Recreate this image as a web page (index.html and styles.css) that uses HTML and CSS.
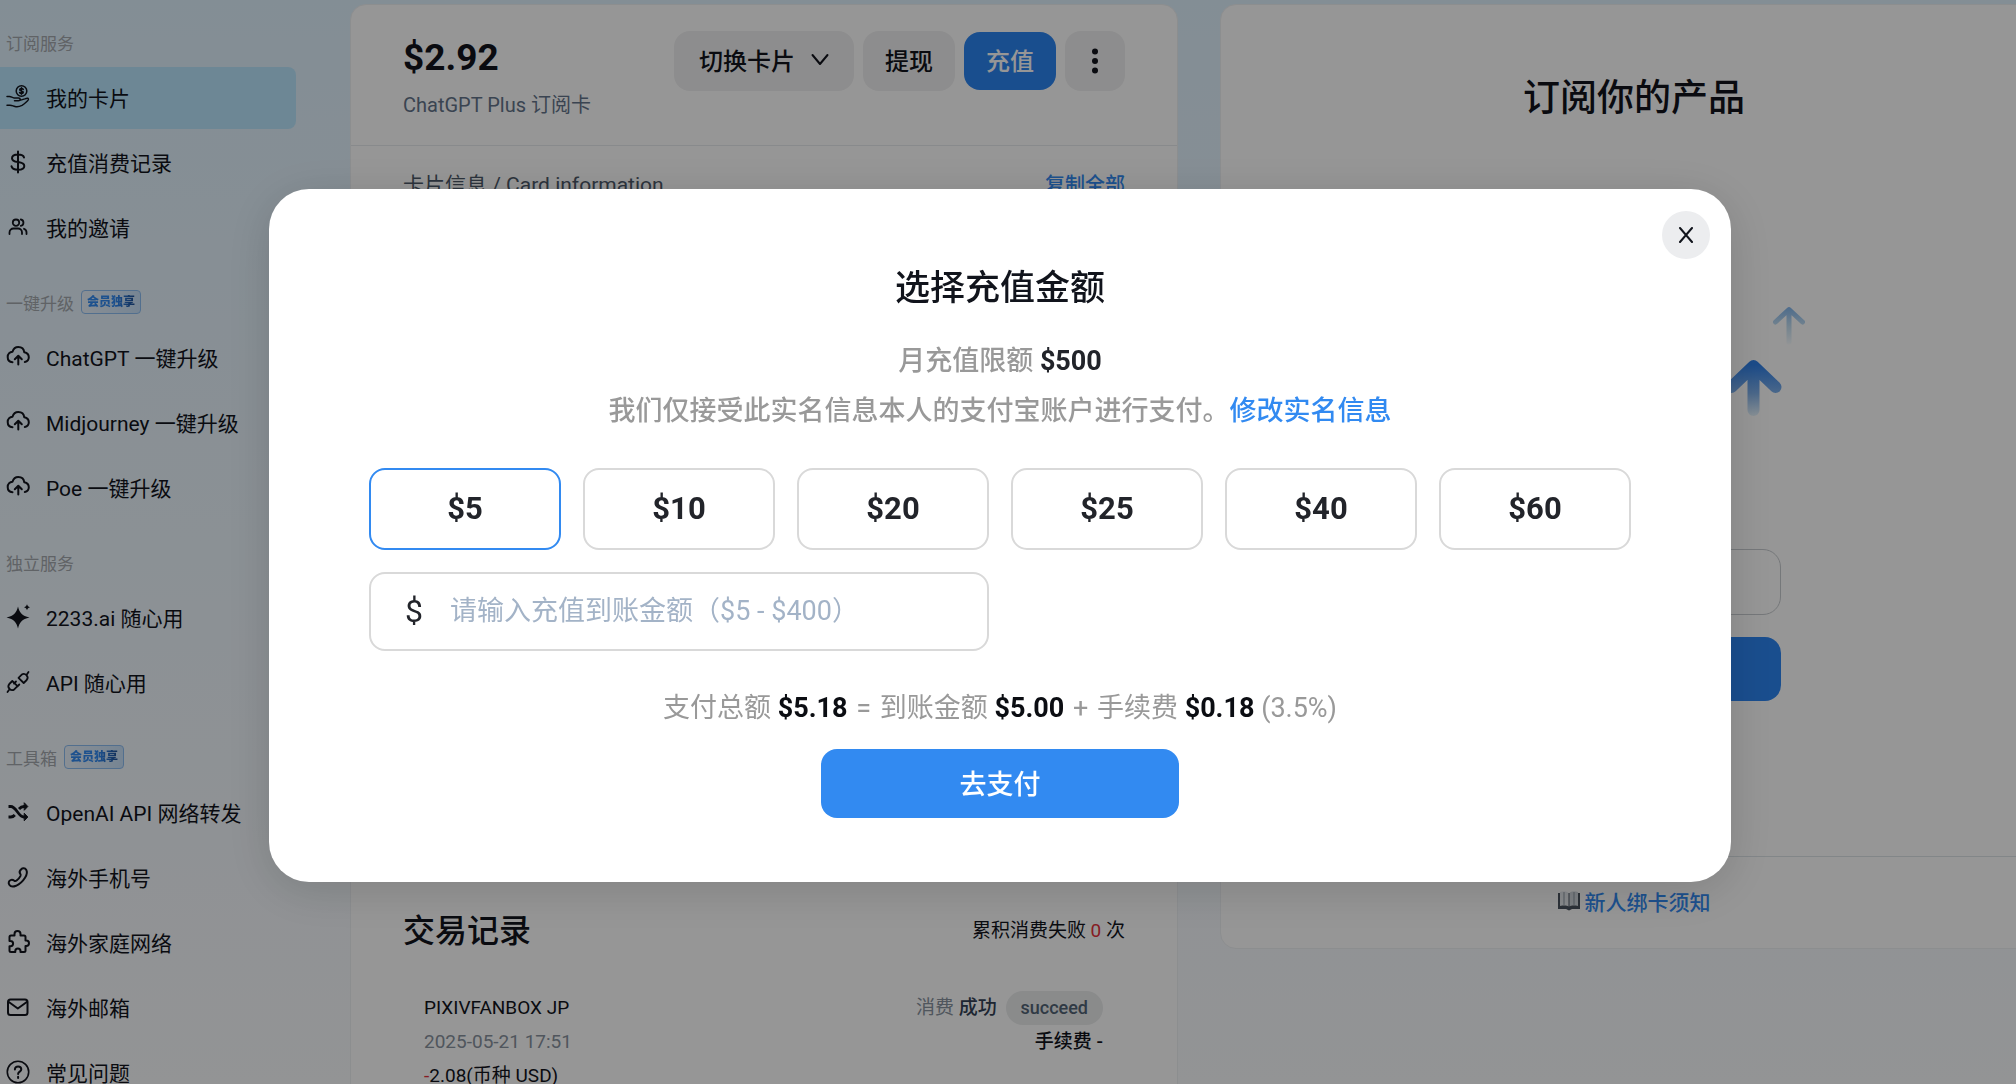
FILE: index.html
```html
<!DOCTYPE html>
<html lang="zh-CN">
<head>
    <meta charset="UTF-8">
    <meta name="viewport" content="width=device-width, initial-scale=1.0">
    <title>我的卡片</title>
    <link rel="stylesheet" href="styles.css">
</head>
<body>
    <svg class="sprite" aria-hidden="true">
        <symbol id="i-cloud" viewBox="0 0 24 24">
            <path d="M6.500 17.200C3.500 17 1.700 14.800 1.700 12 1.700 9 4 6.900 6.500 6.700 7.500 3.500 9.800 2 12.300 2c3.200 0 5.600 2.200 6 5.300 2.700.6 4.500 2.500 4.500 5 0 2.300-1.600 4.300-4 4.800M12.300 19.500V11M8.800 14.200l3.500-3.500 3.500 3.500"/>
        </symbol>
    </svg>

    <div class="shell">
        <nav class="sidebar">
            <section class="nav-group">
                <h2 class="nav-label">订阅服务</h2>
                <a class="nav-item active" href="#cards">
                    <svg viewBox="0 0 24 24"><g stroke-width="1.5"><circle cx="15.500" cy="6" r="5.300"/><path d="M17.300 4.400c-.4-.6-1-.8-1.800-.8-1 0-1.800.4-1.800 1.200 0 1.700 3.600.7 3.600 2.400 0 .8-.8 1.200-1.800 1.200-.9 0-1.500-.3-1.900-.9M15.500 2.700v6.600M1 11.500h2.500c1.800 0 2.700 1.400 4.500 1.400h4.500c2.300 0 2.300 2.800 0 2.800H8.500M13.800 15.400l5-1.500c2.500-1 4-.9 3.500.8-.4 1-4.300 4.500-6.300 5.700-2.500 1.300-5 1.600-7 1.100-2-.5-3-1.300-5-1.300H1"/></g></svg>
                    我的卡片
                </a>
                <a class="nav-item" href="#records">
                    <svg viewBox="0 0 24 24"><path d="M12 1.500v21M18 7.500C17.500 5.500 15.500 4.500 12 4.500c-3.800 0-6 1.300-6 3.700 0 2.300 1.800 3.300 6 3.800s6.300 1.500 6.300 3.900c0 2.400-2.300 3.800-6.300 3.800s-6-1.200-6.500-3.400"/></svg>
                    充值消费记录
                </a>
                <a class="nav-item" href="#invite">
                    <svg viewBox="0 0 24 24"><path stroke-width="1.800" d="M10 4.500a3.200 3.200 0 1 0 0 6.400 3.200 3.200 0 0 0 0-6.400zM3.500 19v-1.500a4 4 0 0 1 4-4h4.500a4 4 0 0 1 4 4V19M14.800 4.500a3.200 3.200 0 0 1 0 6.300M18 13.800a3.800 3.800 0 0 1 2.500 3.700V19"/></svg>
                    我的邀请
                </a>
            </section>

            <section class="nav-group">
                <h2 class="nav-label">一键升级 <span class="badge"><span>会员独享</span></span></h2>
                <a class="nav-item" href="#chatgpt"><svg><use href="#i-cloud"/></svg>ChatGPT 一键升级</a>
                <a class="nav-item" href="#midjourney"><svg><use href="#i-cloud"/></svg>Midjourney 一键升级</a>
                <a class="nav-item" href="#poe"><svg><use href="#i-cloud"/></svg>Poe 一键升级</a>
            </section>

            <section class="nav-group">
                <h2 class="nav-label">独立服务</h2>
                <a class="nav-item" href="#2233">
                    <svg viewBox="0 0 24 24"><g fill="currentColor" stroke="none"><path d="M12 1.500c1.600 6.500 4 9.200 11.500 11-7.500 1.800-9.900 4.500-11.500 11-1.600-6.500-4-9.200-11.500-11 7.500-1.800 9.900-4.500 11.500-11z"/><path d="M21 -.800c.5 1.700 1.300 2.500 3 3-1.700.5-2.500 1.300-3 3-.5-1.700-1.300-2.500-3-3 1.700-.5 2.500-1.300 3-3z"/></g></svg>
                    2233.ai 随心用
                </a>
                <a class="nav-item" href="#api">
                    <svg viewBox="0 0 24 24"><path stroke-width="1.800" d="M12.500 7.800l3-3a3.700 3.700 0 0 1 5.200 5.200l-3 3zM11.500 16.200l-3 3a3.700 3.700 0 0 1-5.200-5.200l3-3zM20.500 5L22.500 2M3.500 19.200L1.500 22M10 11.500l-2 2M13.300 14.500l-2 2"/></svg>
                    API 随心用
                </a>
            </section>

            <section class="nav-group">
                <h2 class="nav-label">工具箱 <span class="badge"><span>会员独享</span></span></h2>
                <a class="nav-item" href="#forward">
                    <svg viewBox="0 0 24 24"><path stroke-width="2.800" stroke-linecap="butt" d="M2.500 6.500h2.300c5.500 0 7.500 10.500 13 10.500h1.500M2.500 17h2.300c1.800 0 3-.8 4-2M13 9c1.300-1.500 3-2.500 5-2.500h1.300"/><path fill="currentColor" stroke-width="1" d="M18.500 3l3.300 3.500-3.300 3.500zM18.500 13.500l3.300 3.500-3.300 3.500z"/></svg>
                    OpenAI API 网络转发
                </a>
                <a class="nav-item" href="#phone">
                    <svg viewBox="0 0 24 24"><path d="M15.200 4.200c1.500-1.500 3.800-1.200 5 .6 1.200 2 .8 4.800-1.200 8-2.300 3.700-5.500 6.500-9 8-3 1.200-5.500.8-6.700-1-1.200-1.800-.5-4 1.300-4.700 1.500-.6 2.500-.2 3.800.7.800.5 1.500.3 2.500-.5 1.500-1.200 2.700-2.700 3.500-4.200.5-1 .4-1.600-.2-2.400-1-1.300-.9-2.700 1-4.500z"/></svg>
                    海外手机号
                </a>
                <a class="nav-item" href="#home-net">
                    <svg viewBox="0 0 24 24"><path d="M8.500 5.500V4a3 3 0 0 1 6 0v1.500H18a1.500 1.500 0 0 1 1.500 1.500v3.500h.8a2.700 2.700 0 0 1 0 5.400h-.8v4.600A1.500 1.500 0 0 1 18 22h-3.500v-1a2.600 2.600 0 0 0-5.200 0v1H5a1.500 1.500 0 0 1-1.500-1.500v-4.300h1a2.600 2.600 0 0 0 0-5.200h-1V7A1.500 1.500 0 0 1 5 5.500z"/></svg>
                    海外家庭网络
                </a>
                <a class="nav-item" href="#mail">
                    <svg viewBox="0 0 24 24"><rect x="2" y="4.500" width="19.500" height="15.500" rx="2.500"/><path d="M2.800 7l9 6.500L20.800 7"/></svg>
                    海外邮箱
                </a>
                <a class="nav-item" href="#faq">
                    <svg viewBox="0 0 24 24"><circle cx="12" cy="12" r="10.700" stroke-width="1.600"/><path d="M8.900 9.500c0-1.900 1.300-3.100 3.200-3.100s3.200 1.200 3.200 2.900c0 2.400-3.200 2.300-3.200 4.700M12.100 16.700v1.200"/></svg>
                    常见问题
                </a>
            </section>
        </nav>

        <main class="columns">
            <section class="card">
                <header class="card-head">
                    <div>
                        <h1 class="balance">$2.92</h1>
                        <p class="card-name">ChatGPT Plus 订阅卡</p>
                    </div>
                    <div class="actions">
                        <button class="btn btn-switch" type="button">
                            切换卡片
                            <svg viewBox="0 0 18 18"><path d="M1.500 5L9 14l7.500-9"/></svg>
                        </button>
                        <button class="btn" type="button">提现</button>
                        <button class="btn btn-blue" type="button">充值</button>
                        <button class="btn btn-more" type="button" aria-label="更多">
                            <svg viewBox="0 0 8 26"><circle cx="4" cy="3.500" r="3"/><circle cx="4" cy="13" r="3"/><circle cx="4" cy="22.500" r="3"/></svg>
                        </button>
                    </div>
                </header>
                <div class="card-info">
                    <span>卡片信息 / Card information</span>
                    <a href="#copy">复制全部</a>
                </div>
                <div class="records-head">
                    <h2>交易记录</h2>
                    <span>累积消费失败 <em>0</em> 次</span>
                </div>
                <div class="record">
                    <div>
                        <p>PIXIVFANBOX JP</p>
                        <p class="muted">2025-05-21 17:51</p>
                        <p><em>-</em>2.08(币种 USD)</p>
                    </div>
                    <div class="record-state">
                        <p><span class="muted">消费</span> <b>成功</b> <span class="pill">succeed</span></p>
                        <p class="fee">手续费 -</p>
                    </div>
                </div>
            </section>

            <section class="card product">
                <h2>订阅你的产品</h2>
                <svg class="arrows" viewBox="0 0 342 120" aria-hidden="true">
                    <defs>
                        <linearGradient id="g-big" x1="0" y1="59" x2="0" y2="116" gradientUnits="userSpaceOnUse">
                            <stop offset="0.1" stop-color="#2f80e8"/>
                            <stop offset="0.6" stop-color="#7fb0ea"/>
                            <stop offset="1" stop-color="#e6f4fd"/>
                        </linearGradient>
                        <linearGradient id="g-small" x1="0" y1="7" x2="0" y2="45" gradientUnits="userSpaceOnUse">
                            <stop offset="0" stop-color="#82b6ee"/>
                            <stop offset="0.5" stop-color="#c3dff2"/>
                            <stop offset="1" stop-color="#fafdff"/>
                        </linearGradient>
                    </defs>
                    <path stroke="url(#g-big)" stroke-width="12" d="M290.500 67V110M268.500 87L290.500 66L312.500 87"/>
                    <path stroke="url(#g-small)" stroke-width="5" d="M326 10V42M312.500 22L326 9.500L339.500 22"/>
                </svg>
                <input class="product-input" type="text" aria-label="产品">
                <button class="product-btn" type="button" aria-label="订阅"></button>
                <footer>
                    <a href="#guide">
                        <svg viewBox="0 0 22 20" aria-hidden="true"><path fill="#4c5560" d="M0 2h22v16h-8l-3 1.500L8 18H0z"/><path fill="#e6eaee" d="M2 1c4-.8 7-.5 8.500 1v13.500C9 14.500 6 14.300 2 15z"/><path fill="#d2d8de" d="M20 1c-4-.8-7-.5-8.500 1v13.500c1.500-1 4.500-1.200 8.500-.5z"/><path stroke="#8d98a3" d="M6 1.500v12M16 1.500v12"/></svg>
                        新人绑卡须知
                    </a>
                </footer>
            </section>
        </main>
    </div>

    <div class="overlay">
        <div class="modal" role="dialog" aria-modal="true" aria-labelledby="modal-title">
            <button class="close" type="button" aria-label="关闭">
                <svg viewBox="0 0 16 16"><path d="M2 1l12 14M14 1L2 15"/></svg>
            </button>
            <h2 id="modal-title">选择充值金额</h2>
            <p class="hint">月充值限额 <strong>$500</strong></p>
            <p class="hint">我们仅接受此实名信息本人的支付宝账户进行支付。<a href="#real-name">修改实名信息</a></p>
            <div class="amounts">
                <button class="amount selected" type="button">$5</button>
                <button class="amount" type="button">$10</button>
                <button class="amount" type="button">$20</button>
                <button class="amount" type="button">$25</button>
                <button class="amount" type="button">$40</button>
                <button class="amount" type="button">$60</button>
                <div class="custom">
                    <label for="custom-amount">$</label>
                    <input id="custom-amount" type="text" placeholder="请输入充值到账金额（$5 - $400）">
                </div>
            </div>
            <p class="total">支付总额 <strong>$5.18</strong> <i>=</i> 到账金额 <strong>$5.00</strong> <i>+</i> 手续费 <strong>$0.18</strong> (3.5%)</p>
            <button class="pay" type="button">去支付</button>
        </div>
    </div>
</body>
</html>
```
FILE: styles.css
```css
* {
    box-sizing: border-box;
}
body {
    margin: 0;
    height: 100vh;
    overflow: hidden;
    font-family: Roboto, "Noto Sans CJK SC", sans-serif;
    color: #11141c;
    background: linear-gradient(#dff1fd, #fafbfe);
}
h1, h2, p {
    margin: 0;
    font-weight: 500;
}
a {
    color: #328af1;
    text-decoration: none;
}
em {
    color: #e5303a;
    font-style: normal;
}
button, input {
    font-family: inherit;
    padding: 0;
}
button {
    cursor: pointer;
}
svg {
    flex: none;
    fill: none;
    stroke: currentColor;
    stroke-linecap: round;
    stroke-linejoin: round;
}
.sprite {
    display: none;
}

/* layout */
.shell {
    display: flex;
    gap: 54px;
    margin-right: -32px;
}
.columns {
    flex: 1;
    display: grid;
    grid-template-columns: 1fr 1fr;
    gap: 42px;
    align-items: start;
    padding-top: 4px;
}

/* sidebar */
.sidebar {
    width: 296px;
    padding-top: 30px;
    display: flex;
    flex-direction: column;
    gap: 31px;
}
.nav-group {
    display: flex;
    flex-direction: column;
    gap: 3px;
}
.nav-label {
    display: flex;
    align-items: center;
    gap: 7px;
    height: 24px;
    margin-bottom: 10px;
    padding-left: 6px;
    font-size: 17px;
    font-weight: 400;
    color: #a4a8ad;
}
.nav-item {
    display: flex;
    align-items: center;
    gap: 16px;
    height: 62px;
    padding: 0 0 2px 6px;
    border-radius: 0 8px 8px 0;
    font-size: 21px;
    color: #11141c;
}
.nav-item svg {
    width: 24px;
    height: 24px;
    stroke-width: 2;
    overflow: visible;
}
.nav-item.active {
    background-color: #bae6fd;
}
.badge {
    height: 24px;
    padding: 0 5px;
    border: 1px solid #8cbdf2;
    border-radius: 4px;
    background: linear-gradient(90deg, #eaf3fc, #c9e2fa);
    font-size: 12px;
    font-weight: 900;
    line-height: 22px;
}
.badge span {
    color: transparent;
    background: linear-gradient(90deg, #328af1 60%, #1d4f96);
    background-clip: text;
}

/* cards */
.card {
    min-height: 1100px;
    background-color: #fff;
    border: 1px solid #eef1f4;
    border-radius: 16px;
}
.card-head {
    display: flex;
    justify-content: space-between;
    align-items: flex-start;
    height: 141px;
    padding: 26px 52px 0;
    border-bottom: 1px solid #e8ebee;
}
.balance {
    font-size: 37px;
    font-weight: 700;
    line-height: 54px;
}
.card-name {
    font-size: 20px;
    font-weight: 400;
    line-height: 40px;
    color: #64748b;
}
.actions {
    display: flex;
    align-items: center;
    gap: 9px;
}
.btn {
    display: flex;
    align-items: center;
    justify-content: center;
    height: 60px;
    padding: 0 22px 4px;
    border: 0;
    border-radius: 16px;
    background-color: #f0f0f1;
    color: #11141c;
    font-size: 24px;
    font-weight: 500;
}
.btn-switch {
    gap: 16px;
    padding: 0 25px 4px;
}
.btn-switch svg {
    width: 18px;
    height: 18px;
    stroke-width: 2;
}
.btn-blue {
    height: 58px;
    background-color: #2c85f2;
    color: #fff;
}
.btn-more {
    width: 60px;
    padding: 0;
}
.btn-more svg {
    width: 8px;
    height: 26px;
    fill: currentColor;
    stroke: none;
}
.card-info {
    display: flex;
    justify-content: space-between;
    min-height: 751px;
    padding: 24px 52px 0;
    font-size: 21px;
    line-height: 30px;
    color: #4c5868;
}
.card-info a {
    font-size: 20px;
    font-weight: 500;
}
.records-head {
    display: flex;
    justify-content: space-between;
    align-items: center;
    height: 62px;
    padding: 0 52px;
    font-size: 19px;
}
.records-head h2 {
    font-size: 32px;
}
.record {
    display: flex;
    justify-content: space-between;
    padding: 32px 74px 0 73px;
    font-size: 19px;
    line-height: 34px;
}
.record p {
    font-weight: 400;
}
.record-state {
    text-align: right;
}
.muted {
    color: #88929e;
}
.record-state b {
    font-weight: 500;
    color: #334155;
}
.pill {
    display: inline-block;
    margin-left: 4px;
    padding: 0 15px;
    border-radius: 17px;
    background-color: #eaeced;
    color: #526476;
    font-size: 18px;
    font-weight: 500;
}
.record .fee {
    font-weight: 500;
}

/* product */
.product {
    display: flex;
    flex-direction: column;
    align-items: center;
    min-height: 0;
    padding-top: 64px;
}
.product h2 {
    font-size: 37px;
    line-height: 60px;
}
.arrows {
    width: 342px;
    height: 120px;
    margin-top: 171px;
}
.product-input {
    width: 293px;
    height: 66px;
    margin-top: 129px;
    border: 1px solid #c8ccd0;
    border-radius: 18px;
    background-color: #fff;
}
.product-btn {
    width: 293px;
    height: 64px;
    margin-top: 22px;
    border: 0;
    border-radius: 16px;
    background-color: #2c85f2;
}
.product footer {
    align-self: stretch;
    display: flex;
    align-items: center;
    justify-content: center;
    height: 92px;
    margin-top: 155px;
    padding-bottom: 4px;
    border-top: 1px solid #dde4e8;
}
.product footer a {
    display: flex;
    align-items: center;
    gap: 5px;
    font-size: 21px;
    font-weight: 500;
}
.product footer svg {
    width: 22px;
    height: 20px;
    stroke: none;
}

/* modal */
.overlay {
    position: fixed;
    inset: 0;
    display: flex;
    align-items: center;
    justify-content: center;
    padding: 0 16px 14px 0;
    background-color: rgba(0, 0, 0, 0.41);
}
.modal {
    position: relative;
    width: 90%;
    max-width: 1462px;
    padding: 76px 100px 64px;
    border-radius: 40px;
    background-color: #fff;
    box-shadow: 0 8px 48px rgba(0, 0, 0, 0.15);
    text-align: center;
}
.modal h2 {
    margin-bottom: 23px;
    font-size: 35px;
    line-height: 48px;
}
.close {
    position: absolute;
    top: 22px;
    right: 21px;
    display: grid;
    place-items: center;
    width: 48px;
    height: 48px;
    border: 0;
    border-radius: 50%;
    background-color: #ecedef;
    color: #11141c;
}
.close svg {
    width: 16px;
    height: 16px;
    stroke-width: 2;
}
.hint, .total {
    font-size: 27px;
    font-weight: 400;
    line-height: 50px;
    color: #999;
}
.hint {
    font-weight: 500;
}
.hint strong {
    color: #22242a;
}
.total strong {
    color: #0b0d12;
}
.total i {
    margin: 0 2px;
    font-style: normal;
}
.amounts {
    display: grid;
    grid-template-columns: repeat(6, 1fr);
    gap: 22px;
    margin: 32px 0;
}
.amount {
    height: 82px;
    border: 2px solid #d9d9d9;
    border-radius: 16px;
    background-color: #fff;
    color: #22242a;
    font-family: "Roboto Slab", Roboto, sans-serif;
    font-size: 31px;
    font-weight: 700;
}
.amount.selected {
    border-color: #328af1;
}
.custom {
    grid-column: span 3;
    display: flex;
    align-items: center;
    height: 79px;
    padding: 0 24px 0 34px;
    border: 2px solid #d9d9d9;
    border-radius: 16px;
}
.custom label {
    width: 45px;
    text-align: left;
    font-size: 32px;
    color: #22242a;
}
.custom input {
    flex: 1;
    min-width: 0;
    height: 50px;
    border: 0;
    outline: 0;
    font-size: 27px;
}
.custom input::placeholder {
    color: #a3b3c7;
}
.pay {
    width: 358px;
    height: 69px;
    margin-top: 16px;
    padding-bottom: 2px;
    border: 0;
    border-radius: 16px;
    background-color: #328af1;
    color: #fff;
    font-size: 27px;
    font-weight: 500;
}
```
